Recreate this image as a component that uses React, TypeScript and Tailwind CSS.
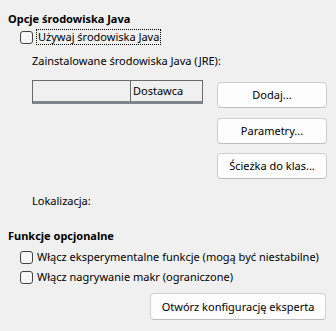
function Checkbox() {
  return <span className="inline-block h-[13px] w-[13px] shrink-0 rounded-[3px] border border-[#444] bg-[#f6f6f6]" />;
}

function Button({ label, className = "" }: { label: string; className?: string }) {
  return (
    <button
      type="button"
      className={`flex h-[26px] items-center justify-center whitespace-nowrap rounded-[4px] border border-[#d0d0d0] border-b-[#bdbdbd] bg-[#fdfdfd] text-[11px] leading-[16px] text-black ${className}`}
    >
      {label}
    </button>
  );
}

export default function App() {
  return (
    <div
      className="h-[331px] w-[336px] overflow-hidden whitespace-nowrap bg-[#f0f0f0] pl-2 pt-[11px] text-[11px] leading-[16px] text-black"
      style={{ fontFamily: '"Noto Sans", "Segoe UI", sans-serif' }}
    >
      <div className="font-bold">Opcje środowiska Java</div>
      <div className="mt-[2px] flex items-center gap-[3px] pl-3">
        <Checkbox />
        <span className="border border-dotted border-black px-[1px] leading-[14px]">Używaj środowiska Java</span>
      </div>

      <div className="pl-6">
        <div className="mt-[8px]">Zainstalowane środowiska Java (JRE):</div>
        <div className="mt-[11px] flex items-start">
          <div className="flex h-[24px] w-[171px] border border-b-[3px] border-[#6b6b6b] border-b-[#80848d]">
            <div className="w-[98px] border-r border-[#6b6b6b]" />
            <div className="pl-[2px] leading-[19px]">Dostawca</div>
          </div>
          <div className="ml-[14px] mt-[2px] flex flex-col">
            <Button label="Dodaj..." className="w-[110px]" />
            <Button label="Parametry..." className="mt-[10px] w-[110px]" />
            <Button label="Ścieżka do klas..." className="mt-[9px] w-[110px]" />
          </div>
        </div>
        <div className="mt-[14px]">Lokalizacja:</div>
      </div>

      <div className="mt-[19px] font-bold">Funkcje opcjonalne</div>
      <div className="mt-[5px] flex items-center gap-[4px] pl-3">
        <Checkbox />
        <span>Włącz eksperymentalne funkcje (mogą być niestabilne)</span>
      </div>
      <div className="mt-[4px] flex items-center gap-[4px] pl-3">
        <Checkbox />
        <span>Włącz nagrywanie makr (ograniczone)</span>
      </div>
      <div className="mt-[8px] flex justify-end pr-[10px]">
        <Button label="Otwórz konfigurację eksperta" className="h-[27px] w-[176px]" />
      </div>
    </div>
  );
}
